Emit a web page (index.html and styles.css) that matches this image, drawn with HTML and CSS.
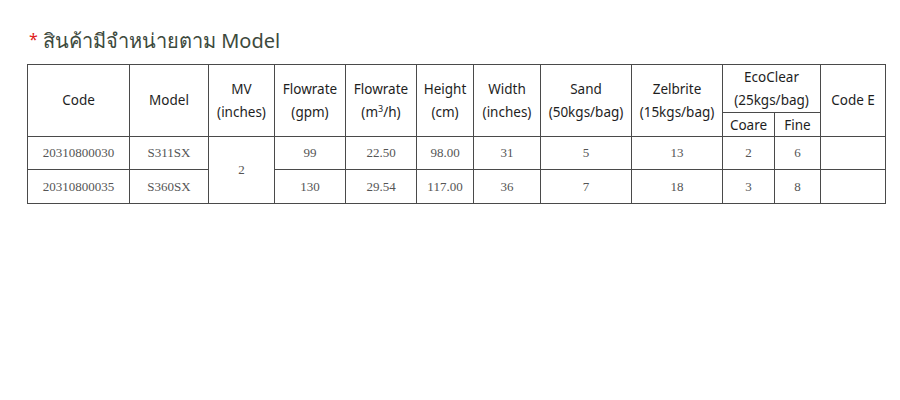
FILE: index.html
```html
<!DOCTYPE html>
<html lang="th">
<head>
<meta charset="utf-8">
<title>Model</title>
<link rel="stylesheet" href="styles.css">
</head>
<body>
<div class="page">
  <h2 class="title"><span class="star">*</span> สินค้ามีจำหน่ายตาม Model</h2>
  <table class="spec">
    <colgroup>
      <col class="c-code"><col class="c-model"><col class="c-mv"><col class="c-fg"><col class="c-fm">
      <col class="c-h"><col class="c-w"><col class="c-sand"><col class="c-zel"><col class="c-coare">
      <col class="c-fine"><col class="c-e">
    </colgroup>
    <thead>
      <tr class="h1">
        <th rowspan="2">Code</th>
        <th rowspan="2">Model</th>
        <th rowspan="2">MV<br>(inches)</th>
        <th rowspan="2">Flowrate<br>(gpm)</th>
        <th rowspan="2">Flowrate<br>(m<sup>3</sup>/h)</th>
        <th rowspan="2">Height<br>(cm)</th>
        <th rowspan="2">Width<br>(inches)</th>
        <th rowspan="2">Sand<br>(50kgs/bag)</th>
        <th rowspan="2">Zelbrite<br>(15kgs/bag)</th>
        <th colspan="2" class="eco">EcoClear<br>(25kgs/bag)</th>
        <th rowspan="2">Code E</th>
      </tr>
      <tr class="h2">
        <th>Coare</th>
        <th>Fine</th>
      </tr>
    </thead>
    <tbody>
      <tr class="r1">
        <td>20310800030</td><td>S311SX</td><td rowspan="2">2</td><td>99</td><td>22.50</td><td>98.00</td><td>31</td><td>5</td><td>13</td><td>2</td><td>6</td><td></td>
      </tr>
      <tr class="r2">
        <td>20310800035</td><td>S360SX</td><td>130</td><td>29.54</td><td>117.00</td><td>36</td><td>7</td><td>18</td><td>3</td><td>8</td><td></td>
      </tr>
    </tbody>
  </table>
</div>
</body>
</html>
```

FILE: styles.css
```css
html, body {
  margin: 0;
  padding: 0;
  background: #ffffff;
}
.page {
  padding: 27px 0 0 27px;
}
.title {
  margin: 0 0 11px 2px;
  font-family: "Noto Sans", "DejaVu Sans", sans-serif;
  font-weight: normal;
  font-size: 20px;
  line-height: 25px;
  color: #3d4a3d;
}
.star {
  color: #e0201a;
  font-size: 16px;
  vertical-align: 3px;
}
.spec {
  border-collapse: collapse;
  table-layout: fixed;
  width: 858px;
}
.spec th, .spec td {
  border: 1px solid #4a4a4a;
  text-align: center;
  padding: 0;
  overflow: visible;
  white-space: nowrap;
}
.spec th {
  font-family: "Noto Sans", "DejaVu Sans", sans-serif;
  font-weight: normal;
  font-size: 13.5px;
  line-height: 23px;
  color: #1e1e1e;
}
.spec th sup {
  font-size: 9px;
  line-height: 0;
  vertical-align: 5px;
}
.spec td {
  font-family: "Liberation Serif", "DejaVu Serif", serif;
  font-size: 13px;
  color: #555;
}
.h1 { height: 48px; }
.h1 th.eco { height: 47px; }
.h2 th { height: 23px; line-height: 22px; }
.r1 td { height: 32px; }
.r2 td { height: 33px; }
.c-code { width: 102px; }
.c-model { width: 79px; }
.c-mv { width: 66px; }
.c-fg { width: 71px; }
.c-fm { width: 71px; }
.c-h { width: 57px; }
.c-w { width: 67px; }
.c-sand { width: 91px; }
.c-zel { width: 91px; }
.c-coare { width: 52px; }
.c-fine { width: 46px; }
.c-e { width: 65px; }
```
